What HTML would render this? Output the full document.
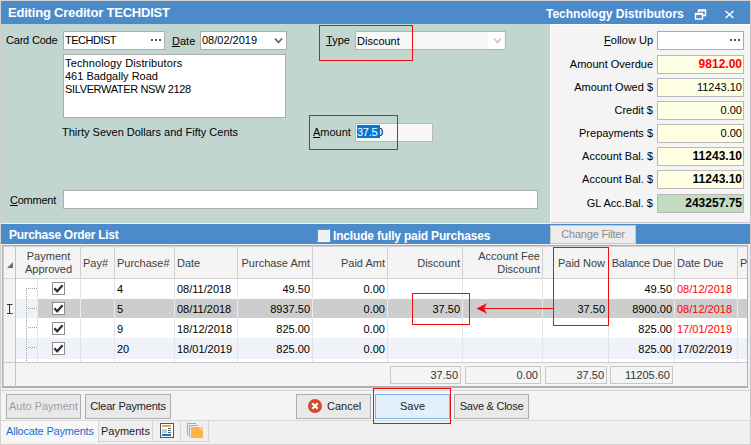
<!DOCTYPE html>
<html><head><meta charset="utf-8">
<style>
*{margin:0;padding:0;box-sizing:border-box}
html,body{width:751px;height:445px;overflow:hidden}
body{position:relative;background:#f0f0f0;font-family:"Liberation Sans",sans-serif;font-size:11px;color:#000}
.a{position:absolute;white-space:nowrap}
.hdr{background:#4b8bca;color:#fff;font-weight:bold;font-size:13px}
.inp{position:absolute;background:#fff;border:1px solid #adadad}
.yel{position:absolute;background:#ffffe4;border:1px solid #b9b9b9;text-align:right;padding-right:1px;line-height:17px}
.lbl{position:absolute;text-align:right;white-space:nowrap;line-height:17px}
.col{position:absolute;top:0;bottom:0;width:1px;background:#e2e2e2}
.hcol{position:absolute;width:1px;background:#d0d0d0}
.redbox{position:absolute;border:1px solid #f20c0c}
.btn{position:absolute;border:1px solid #adadad;background:#e9e9e9;text-align:center;line-height:23px;color:#1e1e1e}
.cb{position:absolute;width:13px;height:13px;border:1px solid #8e8e8e;background:#fff}
.num{position:absolute;text-align:right;white-space:nowrap}
</style></head><body>
<!-- outer border -->
<div class="a" style="left:0;top:0;width:751px;height:445px;border-left:1px solid #d3d1cf;border-top:1px solid #d3d1cf;border-right:1px solid #c8c8c8"></div>

<!-- top blue header -->
<div class="a hdr" style="left:1px;top:1px;width:749px;height:23px"></div>
<div class="a" style="left:8px;top:5px;color:#fff;font-weight:bold;font-size:13px;line-height:16px;letter-spacing:-0.2px">Editing Creditor TECHDIST</div>
<svg class="a" style="left:694px;top:9px" width="13" height="11" viewBox="0 0 13 11"><path d="M4.5 3.5 V1 H11.5 V6.5 H8.5" fill="none" stroke="#fff" stroke-width="1.4"/><rect x="1.5" y="4.5" width="7" height="5.5" fill="none" stroke="#fff" stroke-width="1.4"/><path d="M1.5 5.2 H8.5" stroke="#fff" stroke-width="1.6"/><path d="M4.5 1.8 H11.5" stroke="#fff" stroke-width="1.6"/></svg>
<svg class="a" style="left:724px;top:10px" width="11" height="9" viewBox="0 0 11 9"><path d="M1.5 1 L9.5 8 M9.5 1 L1.5 8" stroke="#fff" stroke-width="1.5"/></svg>
<div class="a" style="left:546px;top:6px;color:#fff;font-weight:bold;font-size:12px;line-height:16px">Technology Distributors</div>

<!-- green area -->
<div class="a" style="left:1px;top:24px;width:549px;height:199px;background:#c2d6d1"></div>

<!-- right panel -->
<div class="a" style="left:550px;top:24px;width:200px;height:199px;background:#f4f4f4;border-left:1px solid #fff;border-top:1px solid #fff;border-bottom:1px solid #c8c8c8"></div>

<!-- Card code -->
<div class="a" style="left:6px;top:33px;line-height:14px;letter-spacing:-0.2px">Card Code</div>
<div class="inp" style="left:63px;top:31px;width:102px;height:19px"></div>
<div class="a" style="left:65px;top:33px;line-height:14px;letter-spacing:-0.5px">TECHDIST</div>
<div class="a" style="left:151px;top:39px;width:2px;height:2px;background:#555"></div><div class="a" style="left:155px;top:39px;width:2px;height:2px;background:#555"></div><div class="a" style="left:159px;top:39px;width:2px;height:2px;background:#555"></div>
<div class="a" style="left:172px;top:34px;line-height:14px"><u>D</u>ate</div>
<div class="inp" style="left:200px;top:31px;width:87px;height:19px"></div>
<div class="a" style="left:202px;top:33px;line-height:14px">08/02/2019</div><svg class="a" style="left:274px;top:37px" width="9" height="8" viewBox="0 0 9 8"><path d="M1 1.5 L4.5 5.5 L8 1.5" fill="none" stroke="#666" stroke-width="1.8"/></svg>

<!-- address -->
<div class="inp" style="left:63px;top:54px;width:223px;height:64px"></div>
<div class="a" style="left:65px;top:57px;line-height:13px"><span style="letter-spacing:0.13px">Technology Distributors</span><br>461 Badgally Road<br><span style="letter-spacing:-0.35px">SILVERWATER NSW 2128</span></div>
<div class="a" style="left:62px;top:125px;line-height:14px">Thirty Seven Dollars and Fifty Cents</div>

<!-- Type -->
<div class="a" style="left:326px;top:33px;line-height:14px"><u>T</u>ype</div>
<div class="inp" style="left:355px;top:31px;width:151px;height:19px;background:#f7f7f7;border-color:#b4b4b4"></div>
<div class="a" style="left:488px;top:32px;width:16px;height:17px;background:#fff"></div><svg class="a" style="left:493px;top:37px" width="9" height="8" viewBox="0 0 9 8"><path d="M1 1.5 L4.5 5.5 L8 1.5" fill="none" stroke="#c8c8c8" stroke-width="1.8"/></svg><div class="a" style="left:357px;top:34px;line-height:14px">Discount</div>

<!-- Amount -->
<div class="a" style="left:313px;top:125px;line-height:14px"><u>A</u>mount</div>
<div class="inp" style="left:355px;top:123px;width:78px;height:19px;background:#f7f7f7;border-color:#b9b9b9"></div>

<div class="a" style="left:377px;top:125px;line-height:14px;color:#000">0</div><div class="a" style="left:357px;top:125px;width:23px;height:13px;background:#0078d7"></div><div class="a" style="left:357px;top:125px;line-height:14px;color:#fff;letter-spacing:-0.3px">37.5</div>

<!-- comment -->
<div class="a" style="left:10px;top:193px;line-height:14px;letter-spacing:-0.25px"><u>C</u>omment</div>
<div class="inp" style="left:63px;top:190px;width:475px;height:19px"></div>

<!-- red boxes top -->
<div class="redbox" style="left:319px;top:25px;width:94px;height:36px"></div>
<div class="redbox" style="left:309px;top:115px;width:89px;height:35px"></div>

<!-- right panel rows -->
<div class="lbl" style="left:560px;width:93px;top:32px"><u>F</u>ollow Up</div>
<div class="inp" style="left:657px;top:31px;width:87px;height:19px"></div><div class="a" style="left:730px;top:39px;width:2px;height:2px;background:#555"></div><div class="a" style="left:734px;top:39px;width:2px;height:2px;background:#555"></div><div class="a" style="left:738px;top:39px;width:2px;height:2px;background:#555"></div>
<div class="lbl" style="left:560px;width:93px;top:56px">Amount Overdue</div>
<div class="yel" style="left:657px;top:55px;width:87px;height:19px;color:#f00;font-weight:bold;font-size:12px">9812.00</div>
<div class="lbl" style="left:560px;width:93px;top:79px">Amount Owed $</div>
<div class="yel" style="left:657px;top:78px;width:87px;height:19px">11243.10</div>
<div class="lbl" style="left:560px;width:93px;top:102px">Credit $</div>
<div class="yel" style="left:657px;top:101px;width:87px;height:19px">0.00</div>
<div class="lbl" style="left:560px;width:93px;top:125px">Prepayments $</div>
<div class="yel" style="left:657px;top:124px;width:87px;height:19px">0.00</div>
<div class="lbl" style="left:560px;width:93px;top:148px">Account Bal. $</div>
<div class="yel" style="left:657px;top:147px;width:87px;height:19px;font-weight:bold;font-size:12px">11243.10</div>
<div class="lbl" style="left:560px;width:93px;top:171px">Account Bal. $</div>
<div class="yel" style="left:657px;top:170px;width:87px;height:19px;font-weight:bold;font-size:12px">11243.10</div>
<div class="lbl" style="left:560px;width:93px;top:195px">GL Acc.Bal. $</div>
<div class="yel" style="left:657px;top:194px;width:87px;height:19px;font-weight:bold;font-size:12px;background:#c3dcc1">243257.75</div>

<!-- blue bar 2 -->
<div class="a hdr" style="left:1px;top:224px;width:749px;height:20px"></div>
<div class="a" style="left:9px;top:228px;color:#fff;font-weight:bold;font-size:12px;line-height:15px;letter-spacing:-0.28px">Purchase Order List</div>
<div class="a" style="left:317px;top:229px;width:13px;height:13px;background:#efefef;border:1px solid #fff;border-left-color:#8f8780;border-top-color:#8f8780"></div>
<div class="a" style="left:333px;top:229px;color:#fff;font-weight:bold;font-size:12px;line-height:15px;letter-spacing:-0.17px">Include fully paid Purchases</div>
<div class="btn" style="left:550px;top:225px;width:86px;height:19px;line-height:17px;color:#8a8a8a;background:#ececec;border-color:#c8c8c8;letter-spacing:-0.2px">Change Filter</div>


<!-- grid -->
<div class="a" style="left:2px;top:245px;width:746px;height:143px;border:1px solid #afafaf;border-bottom:2px solid #b0b0b0;background:#f4f4f4"></div>
<div class="a" style="left:3px;top:246px;width:744px;height:1px;background:#cfcfcf"></div>
<div class="a" style="left:3px;top:246px;width:1px;height:140px;background:#cfcfcf"></div>
<div class="a" style="left:4px;top:247px;width:743px;height:32px;background:#f4f4f4;border-bottom:1px solid #d3d3d3"></div>
<div class="a" style="left:15px;top:247px;height:140px;width:1px;background:#c4c4c4"></div>
<div class="hcol" style="left:80px;top:247px;height:31px"></div>
<div class="hcol" style="left:114px;top:247px;height:31px"></div>
<div class="hcol" style="left:174px;top:247px;height:31px"></div>
<div class="hcol" style="left:237px;top:247px;height:31px"></div>
<div class="hcol" style="left:312px;top:247px;height:31px"></div>
<div class="hcol" style="left:387px;top:247px;height:31px"></div>
<div class="hcol" style="left:462px;top:247px;height:31px"></div>
<div class="hcol" style="left:542px;top:247px;height:31px"></div>
<div class="hcol" style="left:608px;top:247px;height:31px"></div>
<div class="hcol" style="left:674px;top:247px;height:31px"></div>
<div class="hcol" style="left:737px;top:247px;height:31px"></div>
<div class="a" style="left:7px;top:262px;width:0;height:0;border-left:6px solid transparent;border-bottom:6px solid #6d6d6d"></div>
<div class="a" style="left:17px;top:250px;width:63px;text-align:center;line-height:13px;color:#404040">Payment<br>Approved</div>
<div class="a" style="left:83px;top:256px;line-height:14px;color:#404040;">Pay#</div>
<div class="a" style="left:117px;top:256px;line-height:14px;color:#404040;">Purchase#</div>
<div class="a" style="left:177px;top:256px;line-height:14px;color:#404040;">Date</div>
<div class="num" style="left:238px;width:72px;top:256px;line-height:14px;color:#404040;">Purchase Amt</div>
<div class="num" style="left:313px;width:72px;top:256px;line-height:14px;color:#404040;">Paid Amt</div>
<div class="num" style="left:388px;width:72px;top:256px;line-height:14px;color:#404040;">Discount</div>
<div class="num" style="left:463px;width:77px;top:250px;line-height:14px;color:#404040;line-height:13px">Account Fee<br>Discount</div>
<div class="num" style="left:543px;width:62px;top:256px;line-height:14px;color:#404040;">Paid Now</div>
<div class="num" style="left:609px;width:63px;top:256px;line-height:14px;color:#404040;letter-spacing:-0.25px">Balance Due</div>
<div class="a" style="left:677px;top:256px;line-height:14px;color:#404040;">Date Due</div>
<div class="a" style="left:740px;top:256px;line-height:14px;color:#404040;width:7px;overflow:hidden">P</div>
<div class="a" style="left:16px;top:279px;width:731px;height:20px;background:#ffffff"></div>
<div class="a" style="left:38px;top:279px;width:709px;height:20px;background:#ffffff"></div>
<div class="a" style="left:37px;top:279px;width:1px;height:20px;background:#e4e4e4"></div>
<div class="a" style="left:80px;top:279px;width:1px;height:20px;background:#e4e4e4"></div>
<div class="a" style="left:114px;top:279px;width:1px;height:20px;background:#e4e4e4"></div>
<div class="a" style="left:174px;top:279px;width:1px;height:20px;background:#e4e4e4"></div>
<div class="a" style="left:237px;top:279px;width:1px;height:20px;background:#e4e4e4"></div>
<div class="a" style="left:312px;top:279px;width:1px;height:20px;background:#e4e4e4"></div>
<div class="a" style="left:387px;top:279px;width:1px;height:20px;background:#e4e4e4"></div>
<div class="a" style="left:462px;top:279px;width:1px;height:20px;background:#e4e4e4"></div>
<div class="a" style="left:542px;top:279px;width:1px;height:20px;background:#e4e4e4"></div>
<div class="a" style="left:608px;top:279px;width:1px;height:20px;background:#e4e4e4"></div>
<div class="a" style="left:674px;top:279px;width:1px;height:20px;background:#e4e4e4"></div>
<div class="a" style="left:737px;top:279px;width:1px;height:20px;background:#e4e4e4"></div>
<div class="cb" style="left:52px;top:282px"></div>
<svg class="a" style="left:53px;top:283px" width="11" height="11" viewBox="0 0 11 11"><path d="M1.3 5.3 L4.2 8.3 L9.6 2.3" fill="none" stroke="#333" stroke-width="2.3"/></svg>
<div class="a" style="left:117px;top:282px;line-height:14px;">4</div>
<div class="a" style="left:177px;top:282px;line-height:14px;">08/11/2018</div>
<div class="num" style="left:238px;width:72px;top:282px;line-height:14px;">49.50</div>
<div class="num" style="left:313px;width:72px;top:282px;line-height:14px;">0.00</div>
<div class="num" style="left:609px;width:63px;top:282px;line-height:14px;">49.50</div>
<div class="a" style="left:677px;top:282px;line-height:14px;color:#f00;">08/12/2018</div>
<div class="a" style="left:16px;top:299px;width:731px;height:19px;background:#eff3f9"></div>
<div class="a" style="left:38px;top:299px;width:709px;height:19px;background:#cdcdcd"></div>
<div class="a" style="left:37px;top:299px;width:1px;height:19px;background:#ececec"></div>
<div class="a" style="left:80px;top:299px;width:1px;height:19px;background:#ececec"></div>
<div class="a" style="left:114px;top:299px;width:1px;height:19px;background:#ececec"></div>
<div class="a" style="left:174px;top:299px;width:1px;height:19px;background:#ececec"></div>
<div class="a" style="left:237px;top:299px;width:1px;height:19px;background:#ececec"></div>
<div class="a" style="left:312px;top:299px;width:1px;height:19px;background:#ececec"></div>
<div class="a" style="left:387px;top:299px;width:1px;height:19px;background:#ececec"></div>
<div class="a" style="left:462px;top:299px;width:1px;height:19px;background:#ececec"></div>
<div class="a" style="left:542px;top:299px;width:1px;height:19px;background:#ececec"></div>
<div class="a" style="left:608px;top:299px;width:1px;height:19px;background:#ececec"></div>
<div class="a" style="left:674px;top:299px;width:1px;height:19px;background:#ececec"></div>
<div class="a" style="left:737px;top:299px;width:1px;height:19px;background:#ececec"></div>
<div class="cb" style="left:52px;top:302px"></div>
<svg class="a" style="left:53px;top:303px" width="11" height="11" viewBox="0 0 11 11"><path d="M1.3 5.3 L4.2 8.3 L9.6 2.3" fill="none" stroke="#333" stroke-width="2.3"/></svg>
<div class="a" style="left:117px;top:302px;line-height:14px;">5</div>
<div class="a" style="left:177px;top:302px;line-height:14px;">08/11/2018</div>
<div class="num" style="left:238px;width:72px;top:302px;line-height:14px;">8937.50</div>
<div class="num" style="left:313px;width:72px;top:302px;line-height:14px;">0.00</div>
<div class="num" style="left:388px;width:72px;top:302px;line-height:14px;">37.50</div>
<div class="num" style="left:543px;width:62px;top:302px;line-height:14px;">37.50</div>
<div class="num" style="left:609px;width:63px;top:302px;line-height:14px;">8900.00</div>
<div class="a" style="left:677px;top:302px;line-height:14px;color:#f00;">08/12/2018</div>
<div class="a" style="left:16px;top:318px;width:731px;height:20px;background:#ffffff"></div>
<div class="a" style="left:38px;top:318px;width:709px;height:20px;background:#ffffff"></div>
<div class="a" style="left:37px;top:318px;width:1px;height:20px;background:#e4e4e4"></div>
<div class="a" style="left:80px;top:318px;width:1px;height:20px;background:#e4e4e4"></div>
<div class="a" style="left:114px;top:318px;width:1px;height:20px;background:#e4e4e4"></div>
<div class="a" style="left:174px;top:318px;width:1px;height:20px;background:#e4e4e4"></div>
<div class="a" style="left:237px;top:318px;width:1px;height:20px;background:#e4e4e4"></div>
<div class="a" style="left:312px;top:318px;width:1px;height:20px;background:#e4e4e4"></div>
<div class="a" style="left:387px;top:318px;width:1px;height:20px;background:#e4e4e4"></div>
<div class="a" style="left:462px;top:318px;width:1px;height:20px;background:#e4e4e4"></div>
<div class="a" style="left:542px;top:318px;width:1px;height:20px;background:#e4e4e4"></div>
<div class="a" style="left:608px;top:318px;width:1px;height:20px;background:#e4e4e4"></div>
<div class="a" style="left:674px;top:318px;width:1px;height:20px;background:#e4e4e4"></div>
<div class="a" style="left:737px;top:318px;width:1px;height:20px;background:#e4e4e4"></div>
<div class="cb" style="left:52px;top:322px"></div>
<svg class="a" style="left:53px;top:323px" width="11" height="11" viewBox="0 0 11 11"><path d="M1.3 5.3 L4.2 8.3 L9.6 2.3" fill="none" stroke="#333" stroke-width="2.3"/></svg>
<div class="a" style="left:117px;top:322px;line-height:14px;">9</div>
<div class="a" style="left:177px;top:322px;line-height:14px;">18/12/2018</div>
<div class="num" style="left:238px;width:72px;top:322px;line-height:14px;">825.00</div>
<div class="num" style="left:313px;width:72px;top:322px;line-height:14px;">0.00</div>
<div class="num" style="left:609px;width:63px;top:322px;line-height:14px;">825.00</div>
<div class="a" style="left:677px;top:322px;line-height:14px;color:#f00;">17/01/2019</div>
<div class="a" style="left:16px;top:338px;width:731px;height:21px;background:#eff3f9"></div>
<div class="a" style="left:38px;top:338px;width:709px;height:21px;background:#eff3f9"></div>
<div class="a" style="left:37px;top:338px;width:1px;height:21px;background:#e4e4e4"></div>
<div class="a" style="left:80px;top:338px;width:1px;height:21px;background:#e4e4e4"></div>
<div class="a" style="left:114px;top:338px;width:1px;height:21px;background:#e4e4e4"></div>
<div class="a" style="left:174px;top:338px;width:1px;height:21px;background:#e4e4e4"></div>
<div class="a" style="left:237px;top:338px;width:1px;height:21px;background:#e4e4e4"></div>
<div class="a" style="left:312px;top:338px;width:1px;height:21px;background:#e4e4e4"></div>
<div class="a" style="left:387px;top:338px;width:1px;height:21px;background:#e4e4e4"></div>
<div class="a" style="left:462px;top:338px;width:1px;height:21px;background:#e4e4e4"></div>
<div class="a" style="left:542px;top:338px;width:1px;height:21px;background:#e4e4e4"></div>
<div class="a" style="left:608px;top:338px;width:1px;height:21px;background:#e4e4e4"></div>
<div class="a" style="left:674px;top:338px;width:1px;height:21px;background:#e4e4e4"></div>
<div class="a" style="left:737px;top:338px;width:1px;height:21px;background:#e4e4e4"></div>
<div class="cb" style="left:52px;top:342px"></div>
<svg class="a" style="left:53px;top:343px" width="11" height="11" viewBox="0 0 11 11"><path d="M1.3 5.3 L4.2 8.3 L9.6 2.3" fill="none" stroke="#333" stroke-width="2.3"/></svg>
<div class="a" style="left:117px;top:342px;line-height:14px;">20</div>
<div class="a" style="left:177px;top:342px;line-height:14px;">18/01/2019</div>
<div class="num" style="left:238px;width:72px;top:342px;line-height:14px;">825.00</div>
<div class="num" style="left:313px;width:72px;top:342px;line-height:14px;">0.00</div>
<div class="num" style="left:609px;width:63px;top:342px;line-height:14px;">825.00</div>
<div class="a" style="left:677px;top:342px;line-height:14px;color:#000;">17/02/2019</div>
<div class="a" style="left:16px;top:359px;width:731px;height:3px;background:#fff"></div>
<div class="a" style="left:37px;top:359px;width:1px;height:3px;background:#e4e4e4"></div>
<div class="a" style="left:80px;top:359px;width:1px;height:3px;background:#e4e4e4"></div>
<div class="a" style="left:114px;top:359px;width:1px;height:3px;background:#e4e4e4"></div>
<div class="a" style="left:174px;top:359px;width:1px;height:3px;background:#e4e4e4"></div>
<div class="a" style="left:237px;top:359px;width:1px;height:3px;background:#e4e4e4"></div>
<div class="a" style="left:312px;top:359px;width:1px;height:3px;background:#e4e4e4"></div>
<div class="a" style="left:387px;top:359px;width:1px;height:3px;background:#e4e4e4"></div>
<div class="a" style="left:462px;top:359px;width:1px;height:3px;background:#e4e4e4"></div>
<div class="a" style="left:542px;top:359px;width:1px;height:3px;background:#e4e4e4"></div>
<div class="a" style="left:608px;top:359px;width:1px;height:3px;background:#e4e4e4"></div>
<div class="a" style="left:674px;top:359px;width:1px;height:3px;background:#e4e4e4"></div>
<div class="a" style="left:737px;top:359px;width:1px;height:3px;background:#e4e4e4"></div>
<svg class="a" style="left:16px;top:279px" width="22" height="83" fill="#a4a4a4"><rect x="10" y="9" width="1" height="1"/><rect x="10" y="11" width="1" height="1"/><rect x="10" y="13" width="1" height="1"/><rect x="10" y="15" width="1" height="1"/><rect x="10" y="17" width="1" height="1"/><rect x="10" y="19" width="1" height="1"/><rect x="10" y="21" width="1" height="1"/><rect x="10" y="23" width="1" height="1"/><rect x="10" y="25" width="1" height="1"/><rect x="10" y="27" width="1" height="1"/><rect x="10" y="29" width="1" height="1"/><rect x="10" y="31" width="1" height="1"/><rect x="10" y="33" width="1" height="1"/><rect x="10" y="35" width="1" height="1"/><rect x="10" y="37" width="1" height="1"/><rect x="10" y="39" width="1" height="1"/><rect x="10" y="41" width="1" height="1"/><rect x="10" y="43" width="1" height="1"/><rect x="10" y="45" width="1" height="1"/><rect x="10" y="47" width="1" height="1"/><rect x="10" y="49" width="1" height="1"/><rect x="10" y="51" width="1" height="1"/><rect x="10" y="53" width="1" height="1"/><rect x="10" y="55" width="1" height="1"/><rect x="10" y="57" width="1" height="1"/><rect x="10" y="59" width="1" height="1"/><rect x="10" y="61" width="1" height="1"/><rect x="10" y="63" width="1" height="1"/><rect x="10" y="65" width="1" height="1"/><rect x="10" y="67" width="1" height="1"/><rect x="10" y="69" width="1" height="1"/><rect x="10" y="71" width="1" height="1"/><rect x="10" y="73" width="1" height="1"/><rect x="10" y="75" width="1" height="1"/><rect x="10" y="77" width="1" height="1"/><rect x="10" y="79" width="1" height="1"/><rect x="10" y="81" width="1" height="1"/><rect x="12" y="9" width="1" height="1"/><rect x="14" y="9" width="1" height="1"/><rect x="16" y="9" width="1" height="1"/><rect x="18" y="9" width="1" height="1"/><rect x="20" y="9" width="1" height="1"/><rect x="12" y="29" width="1" height="1"/><rect x="14" y="29" width="1" height="1"/><rect x="16" y="29" width="1" height="1"/><rect x="18" y="29" width="1" height="1"/><rect x="20" y="29" width="1" height="1"/><rect x="12" y="48" width="1" height="1"/><rect x="14" y="48" width="1" height="1"/><rect x="16" y="48" width="1" height="1"/><rect x="18" y="48" width="1" height="1"/><rect x="20" y="48" width="1" height="1"/><rect x="12" y="68" width="1" height="1"/><rect x="14" y="68" width="1" height="1"/><rect x="16" y="68" width="1" height="1"/><rect x="18" y="68" width="1" height="1"/><rect x="20" y="68" width="1" height="1"/></svg>
<svg class="a" style="left:7px;top:304px" width="6" height="10" viewBox="0 0 6 10" fill="none" stroke="#333" stroke-width="1"><path d="M0 0.5 H5.5 M2.5 1 V9 M0 9.5 H5.5"/></svg>
<div class="a" style="left:4px;top:362px;width:743px;height:1px;background:#c9c9c9"></div>
<div class="a" style="left:390px;top:366px;width:71px;height:18px;border:1px solid #c8c8c8;background:#f4f4f4;text-align:right;padding-right:2px;line-height:16px;color:#333">37.50</div>
<div class="a" style="left:465px;top:366px;width:76px;height:18px;border:1px solid #c8c8c8;background:#f4f4f4;text-align:right;padding-right:2px;line-height:16px;color:#333">0.00</div>
<div class="a" style="left:545px;top:366px;width:62px;height:18px;border:1px solid #c8c8c8;background:#f4f4f4;text-align:right;padding-right:2px;line-height:16px;color:#333">37.50</div>
<div class="a" style="left:610px;top:366px;width:63px;height:18px;border:1px solid #c8c8c8;background:#f4f4f4;text-align:right;padding-right:2px;line-height:16px;color:#333">11205.60</div>
<div class="redbox" style="left:412px;top:293px;width:58px;height:32px"></div>
<div class="redbox" style="left:553px;top:247px;width:56px;height:79px"></div>
<div class="a" style="left:480px;top:308px;width:73px;height:1px;background:#f20c0c"></div>
<svg class="a" style="left:476px;top:303px" width="12" height="11" viewBox="0 0 12 11"><path d="M0.5 5.5 L11 0.3 L8 5.5 L11 10.7 Z" fill="#f20c0c"/></svg>
<!-- bottom panel -->
<div class="a" style="left:1px;top:390px;width:749px;height:31px;background:#f4f4f4;border-top:1px solid #d2d2d2;border-bottom:1px solid #d8d8d8"></div>
<div class="btn" style="left:6px;top:394px;width:75px;height:25px;color:#a0a0a0">Auto Payment</div>
<div class="btn" style="left:85px;top:394px;width:86px;height:25px;letter-spacing:-0.2px">Clear Payments</div>
<div class="btn" style="left:296px;top:394px;width:75px;height:25px"></div>
<div class="a" style="left:327px;top:399px;line-height:14px;color:#1e1e1e">Cancel</div>
<svg class="a" style="left:308px;top:399px" width="14" height="14" viewBox="0 0 14 14"><circle cx="7" cy="7" r="7" fill="#d24a2f"/><path d="M4.3 4.3 L9.7 9.7 M9.7 4.3 L4.3 9.7" stroke="#fff" stroke-width="2.2"/></svg>
<div class="btn" style="left:375px;top:394px;width:75px;height:25px;background:#e3effb;border-color:#7eb4ea">Save</div>
<div class="btn" style="left:454px;top:394px;width:75px;height:25px;letter-spacing:-0.25px">Save &amp; Close</div>

<!-- tabs -->
<div class="a" style="left:1px;top:421px;width:749px;height:24px;background:#f0f0f0"></div>
<div class="a" style="left:1px;top:421px;width:97px;height:22px;background:#f7f7f7"></div>
<div class="a" style="left:6px;top:424px;line-height:14px;color:#1c6fd0;letter-spacing:-0.2px">Allocate Payments</div>
<div class="a" style="left:98px;top:421px;width:55px;height:21px;border:1px solid #d6d6d6;border-top:0;background:#efefef"></div>
<div class="a" style="left:101px;top:424px;line-height:14px;color:#222">Payments</div>
<div class="a" style="left:152px;top:421px;width:29px;height:21px;border:1px solid #d6d6d6;border-top:0;background:#efefef"></div>
<div class="a" style="left:180px;top:421px;width:29px;height:21px;border:1px solid #d6d6d6;border-top:0;background:#efefef"></div>
<svg class="a" style="left:160px;top:423px" width="14" height="15" viewBox="0 0 14 15">
<rect x="0.5" y="0.5" width="13" height="14" fill="#fff" stroke="#555"/>
<rect x="2" y="2" width="9" height="2" fill="#e8a84a"/>
<rect x="2" y="6" width="5" height="4" fill="#a6d2f2"/>
<rect x="8" y="5" width="3" height="1" fill="#666"/>
<rect x="8" y="7" width="3" height="1" fill="#666"/>
<rect x="8" y="9" width="3" height="1" fill="#666"/>
<rect x="2" y="11" width="9" height="2" fill="#2a6ab8"/>
</svg>
<svg class="a" style="left:187px;top:423px" width="17" height="15" viewBox="0 0 17 15">
<path d="M0.5 12 V0.5 H9" fill="none" stroke="#e1a040"/>
<path d="M2.5 14 V2.5 H11" fill="none" stroke="#e1a040"/>
<path d="M4 4 H12 L16 8 V15 H4 Z" fill="#fbb447"/>
<path d="M12.5 3.5 L16.5 7.5" stroke="#fff" stroke-width="1"/>
<path d="M13.2 4 H16 V6.8 Z" fill="#fbb447"/>
</svg>
<div class="a" style="left:1px;top:444px;width:749px;height:1px;background:#d4d4d4"></div>
<div class="redbox" style="left:373px;top:388px;width:78px;height:36px"></div>

</body></html>
